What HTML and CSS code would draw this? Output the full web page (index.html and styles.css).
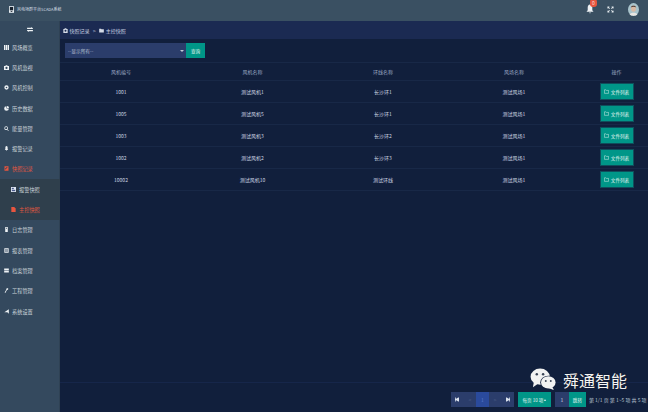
FILE: index.html
```html
<!DOCTYPE html>
<html lang="zh-CN">
<head>
    <meta charset="UTF-8">
    <meta name="viewport" content="width=device-width, initial-scale=1.0">
    <title>主控快照</title>
    <link rel="stylesheet" href="styles.css">
</head>
<body>
    <header class="topbar">
        <div class="brand">
            <svg class="brand-icon" viewBox="0 0 6 8"><rect width="6" height="8" fill="#e8eef2"/><rect x="1" y="1" width="4" height="4" fill="#1a2430"/><rect x="2" y="6" width="2" height="1" fill="#1a2430"/></svg>
            <span>风电场群平台SCADA系统</span>
        </div>
        <div class="top-tools">
            <div class="bell">
                <svg viewBox="0 0 8 10" class="bell-icon"><path d="M4 0.5C5.6 0.5 6.3 2 6.3 3.6V6.2L7.5 7.8H0.5L1.7 6.2V3.6C1.7 2 2.4 0.5 4 0.5ZM3 8.4H5L4 9.6Z" fill="#eef2f5"/></svg>
                <span class="badge">0</span>
            </div>
            <svg viewBox="0 0 8 8" class="expand-icon"><path d="M0.5 0.5H3L2.2 1.3L3.4 2.5L2.5 3.4L1.3 2.2L0.5 3ZM7.5 0.5V3L6.7 2.2L5.5 3.4L4.6 2.5L5.8 1.3L5 0.5ZM0.5 7.5V5L1.3 5.8L2.5 4.6L3.4 5.5L2.2 6.7L3 7.5ZM7.5 7.5H5L5.8 6.7L4.6 5.5L5.5 4.6L6.7 5.8L7.5 5Z" fill="#e6ecf0"/></svg>
            <svg viewBox="0 0 11 13" class="avatar"><ellipse cx="5.5" cy="6.5" rx="5.5" ry="6.5" fill="#a9c4cc"/><ellipse cx="5.5" cy="5.6" rx="2.5" ry="3.2" fill="#d8b9a4"/><path d="M2.8 4.6C3 2 8 2 8.2 4.6C7 3.6 4 3.6 2.8 4.6Z" fill="#4a3a34"/><path d="M1.6 11.6C2.4 9.2 8.6 9.2 9.4 11.6C8 13.2 3 13.2 1.6 11.6Z" fill="#e9e6e2"/></svg>
        </div>
    </header>

    <div class="layout">
        <nav class="sidebar">
            <div class="nav-toggle">
                <svg viewBox="0 0 7 6"><path d="M0 1H5V0L7 1.6V2.4H0ZM7 3.6V5H2V6L0 4.4V3.6Z" fill="#f0f4f6"/></svg>
            </div>
            <a class="nav-item"><svg viewBox="0 0 6 6"><path d="M0 0H1.6V6H0ZM2.2 0H3.8V6H2.2ZM4.4 0H6V6H4.4Z"/></svg>风场概览</a>
            <a class="nav-item"><svg viewBox="0 0 6 6"><path d="M0 1.2H1.6L2.2 .2H3.8L4.4 1.2H6V6H0ZM3 2.2A1.3 1.3 0 1 0 3 4.8A1.3 1.3 0 1 0 3 2.2Z" fill-rule="evenodd"/></svg>风机监视</a>
            <a class="nav-item"><svg viewBox="0 0 6 6"><path d="M3 .4A2.6 2.6 0 1 1 3 5.6A2.6 2.6 0 1 1 3 .4ZM3 2A1 1 0 1 0 3 4A1 1 0 1 0 3 2Z" fill-rule="evenodd"/></svg>风机控制</a>
            <a class="nav-item"><svg viewBox="0 0 6 6"><path d="M3 .2A2.8 2.8 0 1 0 5.8 3H3Z"/><path d="M3.6 0A2.4 2.4 0 0 1 6 2.4H3.6Z"/></svg>历史数据</a>
            <a class="nav-item"><svg viewBox="0 0 6 6"><path d="M2.6 .4A2.2 2.2 0 1 1 2.6 4.8A2.2 2.2 0 1 1 2.6 .4ZM2.6 1.3A1.3 1.3 0 1 0 2.6 3.9A1.3 1.3 0 1 0 2.6 1.3ZM4 4.2L5.8 5.4L5.2 6L3.6 4.6Z" fill-rule="evenodd"/></svg>能量管理</a>
            <a class="nav-item"><svg viewBox="0 0 6 7"><path d="M3 0C4.2 0 4.6 1.2 4.6 2.6V4.4L5.4 5.6H.6L1.4 4.4V2.6C1.4 1.2 1.8 0 3 0ZM2.2 6H3.8L3 7Z"/></svg>报警记录</a>
            <a class="nav-item active"><svg viewBox="0 0 6 6"><path d="M.6 .4H5.4V5.6H.6ZM1.4 4.6L4.6 1.4H3L1.4 3Z" fill-rule="evenodd"/></svg>快照记录</a>
            <div class="nav-sub">
                <a class="nav-item sub"><svg viewBox="0 0 6 6"><rect width="6" height="6" fill="#dfe6f2"/><rect x="1" y="1" width="2.4" height="1.6" fill="#4a5a8a"/><rect x="1" y="3.4" width="4" height="1.6" fill="#4a5a8a"/></svg>报警快照</a>
                <a class="nav-item sub active"><svg viewBox="0 0 6 6"><path d="M.4 0H3.8L5.6 1.8V6H.4Z"/></svg>主控快照</a>
            </div>
            <a class="nav-item"><svg viewBox="0 0 6 7"><path d="M1.2 0H4.8V7H1.2ZM2.4 1.2V2.4H3.6V1.2Z" fill-rule="evenodd"/></svg>日志管理</a>
            <a class="nav-item"><svg viewBox="0 0 6 6"><path d="M.4 .4H5.6V5.6H.4ZM1.2 1.8V2.6H4.8V1.8ZM1.2 3.4V4.2H4.8V3.4Z" fill-rule="evenodd"/></svg>报表管理</a>
            <a class="nav-item"><svg viewBox="0 0 6 6"><path d="M.2 .6H5.8V2.6H.2ZM.2 3.4H5.8V5.4H.2Z"/></svg>档案管理</a>
            <a class="nav-item"><svg viewBox="0 0 6 7"><path d="M4 0L5.6 1L5 2.4L3.6 2.8L1.4 7L.4 6.4L2.6 2.4L2.8 1Z"/></svg>工程管理</a>
            <a class="nav-item"><svg viewBox="0 0 6 6"><path d="M5.8 .2V5.8L4 4H.4Z"/></svg>系统设置</a>
        </nav>

        <main class="content">
            <div class="crumbs">
                <svg viewBox="0 0 6 6"><path d="M.4 1.2H1.6L2.2 .2H3.8L4.4 1.2H5.6V6H.4ZM3 2.2A1.2 1.2 0 1 0 3 4.6A1.2 1.2 0 1 0 3 2.2Z" fill-rule="evenodd"/></svg>
                <span>快照记录</span>
                <span class="crumb-sep">&gt;</span>
                <svg viewBox="0 0 6 6"><path d="M.2 .8H2.4L3 1.6H5.8V5.4H.2Z"/></svg>
                <span>主控快照</span>
            </div>

            <div class="filter-row">
                <div class="select-box">
                    <span>--显示所有--</span>
                    <i class="caret"></i>
                </div>
                <button class="btn search-btn">查询</button>
            </div>

            <table class="data-table">
                <thead>
                    <tr>
                        <th class="col-a">风机编号</th>
                        <th class="col-b">风机名称</th>
                        <th class="col-c">环线名称</th>
                        <th class="col-d">风场名称</th>
                        <th>操作</th>
                    </tr>
                </thead>
                <tbody>
                    <tr><td>1001</td><td>测试风机1</td><td>长沙环1</td><td>测试风场1</td><td><button class="btn file-btn"><svg viewBox="0 0 6 6"><path d="M.5 1H2.3L2.9 1.7H5.5V5.2H.5Z"/></svg>文件列表</button></td></tr>
                    <tr><td>1005</td><td>测试风机5</td><td>长沙环1</td><td>测试风场1</td><td><button class="btn file-btn"><svg viewBox="0 0 6 6"><path d="M.5 1H2.3L2.9 1.7H5.5V5.2H.5Z"/></svg>文件列表</button></td></tr>
                    <tr><td>1003</td><td>测试风机3</td><td>长沙环2</td><td>测试风场1</td><td><button class="btn file-btn"><svg viewBox="0 0 6 6"><path d="M.5 1H2.3L2.9 1.7H5.5V5.2H.5Z"/></svg>文件列表</button></td></tr>
                    <tr><td>1002</td><td>测试风机2</td><td>长沙环3</td><td>测试风场1</td><td><button class="btn file-btn"><svg viewBox="0 0 6 6"><path d="M.5 1H2.3L2.9 1.7H5.5V5.2H.5Z"/></svg>文件列表</button></td></tr>
                    <tr><td>10002</td><td>测试风机10</td><td>测试环线</td><td>测试风场1</td><td><button class="btn file-btn"><svg viewBox="0 0 6 6"><path d="M.5 1H2.3L2.9 1.7H5.5V5.2H.5Z"/></svg>文件列表</button></td></tr>
                </tbody>
            </table>

            <footer class="pager-bar">
                <div class="pager">
                    <span class="page-btn"><svg viewBox="0 0 5 5"><path d="M0 0H1V2L4 0H5V5H4L1 3V5H0Z"/></svg></span>
                    <span class="page-btn dim">&lt;</span>
                    <span class="page-btn current">1</span>
                    <span class="page-btn dim">&gt;</span>
                    <span class="page-btn"><svg viewBox="0 0 5 5"><path d="M0 0H1L4 2V0H5V5H4V3L1 5H0Z"/></svg></span>
                </div>
                <button class="btn size-btn">每页 10 项 <i class="caret-up"></i></button>
                <div class="jump">
                    <span class="jump-input">1</span>
                    <button class="btn jump-btn">跳转</button>
                </div>
                <span class="page-info">第 1/1 页 第 1~5 项 共 5 项</span>
            </footer>
        </main>
    </div>

    <!-- 公众号水印 -->
    <div class="watermark">
        <svg viewBox="0 0 28 24" class="wechat"><ellipse cx="10.5" cy="9" rx="10" ry="8.4" fill="#f2f2f2"/><path d="M4 14L3 20L9 16Z" fill="#f2f2f2"/><ellipse cx="19" cy="15" rx="8.4" ry="7" fill="#101d3a"/><ellipse cx="19" cy="15" rx="7.6" ry="6.4" fill="#f2f2f2"/><path d="M23 19.5L25 23L19.5 21Z" fill="#f2f2f2"/><circle cx="7" cy="6.6" r="1.3" fill="#3a4456"/><circle cx="13.6" cy="6.6" r="1.3" fill="#3a4456"/><circle cx="16.4" cy="13.6" r="1" fill="#3a4456"/><circle cx="21.6" cy="13.6" r="1" fill="#3a4456"/></svg>
        <span>舜通智能</span>
    </div>
</body>
</html>
```

FILE: styles.css
```css
* {
    box-sizing: border-box;
}

html, body {
    height: 100%;
}

body {
    margin: 0;
    display: flex;
    flex-direction: column;
    overflow: hidden;
    background: #111f3c;
    color: #d0d8e2;
    font-family: "Noto Sans CJK SC", "Liberation Sans", sans-serif;
    font-size: 5px;
}

.topbar {
    height: 21px;
    flex: none;
    display: flex;
    align-items: center;
    justify-content: space-between;
    padding: 0 9px 3px 9px;
    background: #3a5062;
}

.brand {
    display: flex;
    align-items: center;
    gap: 3px;
    font-size: 4px;
    color: #d5dde3;
}

.brand-icon {
    width: 5px;
    height: 7px;
}

.top-tools {
    display: flex;
    align-items: center;
}

.bell {
    position: relative;
    width: 8px;
    height: 10px;
    margin-right: 13px;
}

.bell-icon {
    display: block;
    width: 8px;
    height: 10px;
}

.badge {
    position: absolute;
    left: 4px;
    top: -5px;
    width: 7px;
    height: 8px;
    border-radius: 3px;
    background: #e8553f;
    color: #f7d8d2;
    font-size: 5px;
    line-height: 8px;
    text-align: center;
}

.expand-icon {
    width: 7px;
    height: 7px;
    margin-right: 14px;
}

.avatar {
    width: 11px;
    height: 13px;
}

.layout {
    flex: 1;
    display: flex;
    min-height: 0;
}

.sidebar {
    width: 60px;
    flex: none;
    background: #34495e;
    box-shadow: inset -1px 0 0 #2f4254;
}

.nav-toggle {
    height: 16px;
    display: flex;
    align-items: center;
    justify-content: center;
}

.nav-toggle svg {
    width: 6px;
    height: 5px;
}

.nav-item {
    height: 20.3px;
    display: flex;
    align-items: center;
    gap: 3px;
    padding-left: 4px;
    font-size: 5.2px;
    color: #ccd4da;
}

.nav-item svg {
    width: 5px;
    height: 5px;
    flex: none;
    fill: #eef2f5;
}

.nav-item.active {
    color: #e4583f;
}

.nav-item.active svg {
    fill: #e8553f;
}

.nav-sub {
    background: #2f3f4c;
}

.nav-item.sub {
    padding-left: 11px;
}

.content {
    flex: 1;
    min-width: 0;
    display: flex;
    flex-direction: column;
}

.crumbs {
    height: 18px;
    flex: none;
    display: flex;
    align-items: center;
    gap: 1.5px;
    padding-left: 3px;
    background: #1b2a52;
    color: #d0d8e6;
}

.crumbs svg {
    width: 5px;
    height: 5px;
    fill: #d4dae6;
}

.crumb-sep {
    margin: 0 2px;
}

.filter-row {
    flex: none;
    display: flex;
    height: 23px;
    padding: 4px 5px;
}

.select-box {
    width: 121px;
    height: 15px;
    display: flex;
    align-items: center;
    justify-content: space-between;
    padding: 0 2px 0 3px;
    background: #2b3d6b;
    color: #b8c2d4;
    font-size: 4.7px;
}

.caret {
    width: 0;
    height: 0;
    border: 2px solid transparent;
    border-top: 2.5px solid #c3ccd8;
    border-bottom: 0;
}

.btn {
    border: none;
    padding: 0;
    background: #009688;
    color: #e6f6f3;
    font-family: inherit;
    font-size: 4.6px;
}

.search-btn {
    width: 19px;
    height: 15px;
}

.data-table {
    width: 100%;
    flex: none;
    table-layout: fixed;
    border-collapse: collapse;
    border-top: 1px solid #182847;
}

.data-table th {
    height: 18px;
    padding: 0;
    font-weight: normal;
    color: #9aa7c2;
    border-bottom: 1px solid #182847;
}

.data-table td {
    height: 22px;
    padding: 0;
    text-align: center;
    color: #cdd5e2;
    border-bottom: 1px solid #182847;
}

.col-a {
    width: 122px;
}

.col-b {
    width: 141px;
}

.col-c {
    width: 120px;
}

.col-d {
    width: 142px;
}

.file-btn {
    display: inline-flex;
    align-items: center;
    justify-content: center;
    gap: 2px;
    width: 32px;
    height: 14.5px;
    vertical-align: middle;
    box-shadow: 0 0 0 1px #0f4f5c;
}

.file-btn svg {
    width: 5px;
    height: 5px;
    fill: none;
    stroke: #dff2ef;
    stroke-width: .6;
}

.pager-bar {
    margin-top: auto;
    height: 30px;
    flex: none;
    display: flex;
    align-items: flex-start;
    padding-top: 9px;
    padding-left: 391px;
    border-top: 1px solid #16264a;
}

.pager {
    display: flex;
    margin-right: 4px;
}

.page-btn {
    width: 12.6px;
    height: 15px;
    display: flex;
    align-items: center;
    justify-content: center;
    background: #2b3d6b;
    color: #dbe2ee;
}

.page-btn svg {
    width: 4px;
    height: 5px;
    fill: #dbe2ee;
}

.page-btn.dim {
    color: #52618a;
}

.page-btn.current {
    background: #2a4a9c;
    color: #5a78c8;
}

.size-btn {
    width: 33px;
    height: 15px;
    margin-right: 4px;
    white-space: nowrap;
}

.caret-up {
    display: inline-block;
    width: 0;
    height: 0;
    border: 1.5px solid transparent;
    border-bottom: 2px solid #dff2ef;
    border-top: 0;
    vertical-align: middle;
}

.jump {
    display: flex;
    margin-right: 3px;
}

.jump-input {
    width: 14px;
    height: 15px;
    display: flex;
    align-items: center;
    justify-content: center;
    background: #2b3d6b;
}

.jump-btn {
    width: 17px;
    height: 15px;
}

.page-info {
    line-height: 15px;
    white-space: nowrap;
    color: #b8c2d0;
}

.watermark {
    position: absolute;
    left: 530px;
    top: 368px;
    display: flex;
    align-items: center;
    gap: 6px;
    color: #f4f4f4;
    font-size: 16px;
    line-height: 22px;
    text-shadow: 0 0 1px #1a1a1a;
}

.wechat {
    width: 27px;
    height: 23px;
}
```
